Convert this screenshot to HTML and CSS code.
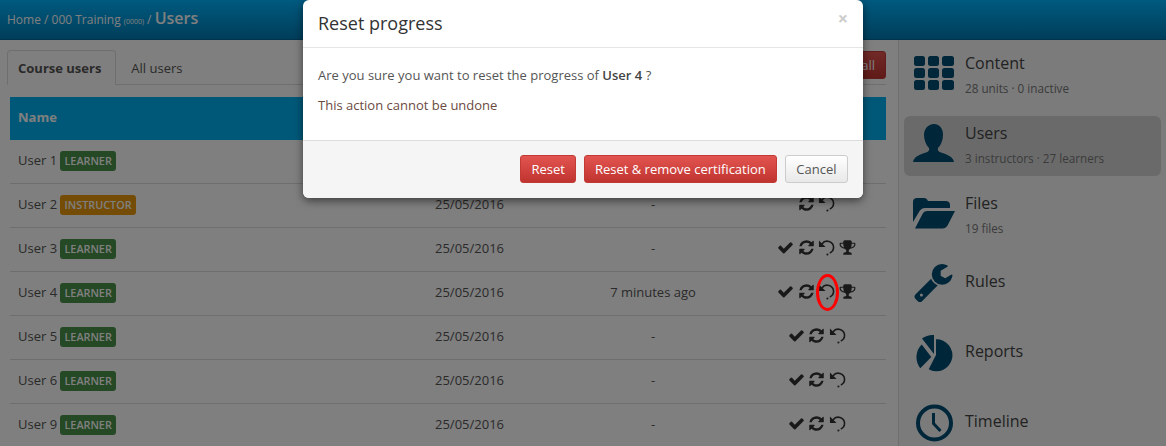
FILE: index.html
```html
<!DOCTYPE html>
<html lang="en">
<head>
    <meta charset="UTF-8">
    <title>Users</title>
    <link rel="stylesheet" href="styles.css">
</head>
<body>
    <svg class="icon-defs" width="0" height="0">
        <symbol id="i-check" viewBox="0 0 1792 1792"><path d="M1671 566q0 40-28 68l-724 724-136 136q-28 28-68 28t-68-28l-136-136-362-362q-28-28-28-68t28-68l136-136q28-28 68-28t68 28l294 295 656-657q28-28 68-28t68 28l136 136q28 28 28 68z"/></symbol>
        <symbol id="i-refresh" viewBox="0 0 1792 1792"><path d="M1639 1056q0 5-1 7-64 268-268 434.5t-478 166.5q-146 0-282.5-55t-243.5-157l-129 129q-19 19-45 19t-45-19-19-45v-448q0-26 19-45t45-19h448q26 0 45 19t19 45-19 45l-137 137q71 66 161 102t187 36q134 0 250-65t186-179q11-17 53-117 8-23 30-23h192q13 0 22.5 9.5t9.5 22.5zm25-800v448q0 26-19 45t-45 19h-448q-26 0-45-19t-19-45 19-45l138-138q-148-137-349-137-134 0-250 65t-186 179q-11 17-53 117-8 23-30 23h-199q-13 0-22.5-9.5t-9.5-22.5v-7q65-268 270-434.5t480-166.5q146 0 284 55.5t245 156.5l130-129q19-19 45-19t45 19 19 45z"/></symbol>
        <symbol id="i-undo" viewBox="0 0 18 18"><path d="M1 1.500v7h7z"/><path d="M4.200 5.200A6.800 6.800 0 0 1 16.500 9 6.800 6.800 0 0 1 12.500 14.800" fill="none" stroke="currentColor" stroke-width="1.700"/><circle cx="10" cy="16.500" r="1.100"/></symbol>
        <symbol id="i-trophy" viewBox="0 0 1792 1792"><path d="M522 883q-74-162-74-371h-256v96q0 78 94.5 162t235.5 113zm1078-275v-96h-256q0 209-74 371 141-29 235.5-113t94.5-162zm128-128v128q0 71-41.5 143t-112 130-173 97.5-215.5 44.5q-42 54-95 95-38 34-52.5 72.5t-14.5 89.5q0 54 30.5 91t97.5 37q75 0 133.5 45.5t58.5 114.5v64q0 14-9 23t-23 9h-832q-14 0-23-9t-9-23v-64q0-69 58.5-114.5t133.5-45.5q67 0 97.5-37t30.5-91q0-51-14.5-89.5t-52.5-72.5q-53-41-95-95-113-5-215.5-44.5t-173-97.5-112-130-41.5-143v-128q0-40 28-68t68-28h288v-96q0-66 47-113t113-47h576q66 0 113 47t47 113v96h288q40 0 68 28t28 68z"/></symbol>
    </svg>

    <div class="page">
        <!-- Top bar -->
        <header class="topbar">
            <span>Home / 000 Training <small>(0000)</small> / </span><strong>Users</strong>
        </header>

        <div class="layout">
            <main class="main">
                <div class="tabs">
                    <a class="tab active">Course users</a>
                    <a class="tab">All users</a>
                    <button class="btn btn-red tab-action">Reset all</button>
                </div>

                <table class="users">
                    <colgroup>
                        <col class="col-name"><col class="col-date"><col class="col-seen"><col class="col-actions">
                    </colgroup>
                    <thead>
                        <tr><th>Name</th><th></th><th></th><th></th></tr>
                    </thead>
                    <tbody>
                        <tr>
                            <td>User 1 <span class="label green">LEARNER</span></td>
                            <td></td><td></td><td></td>
                        </tr>
                        <tr>
                            <td>User 2 <span class="label orange">INSTRUCTOR</span></td>
                            <td>25/05/2016</td><td class="mid">-</td>
                            <td class="mid"><span class="actions"><svg class="act"><use href="#i-refresh"/></svg><svg class="act"><use href="#i-undo"/></svg></span></td>
                        </tr>
                        <tr>
                            <td>User 3 <span class="label green">LEARNER</span></td>
                            <td>25/05/2016</td><td class="mid">-</td>
                            <td class="mid"><span class="actions"><svg class="act"><use href="#i-check"/></svg><svg class="act"><use href="#i-refresh"/></svg><svg class="act"><use href="#i-undo"/></svg><svg class="act"><use href="#i-trophy"/></svg></span></td>
                        </tr>
                        <tr>
                            <td>User 4 <span class="label green">LEARNER</span></td>
                            <td>25/05/2016</td><td class="mid">7 minutes ago</td>
                            <td class="mid"><span class="actions"><svg class="act"><use href="#i-check"/></svg><svg class="act"><use href="#i-refresh"/></svg><svg class="act"><use href="#i-undo"/></svg><svg class="act"><use href="#i-trophy"/></svg></span></td>
                        </tr>
                        <tr>
                            <td>User 5 <span class="label green">LEARNER</span></td>
                            <td>25/05/2016</td><td class="mid">-</td>
                            <td class="mid"><span class="actions"><svg class="act"><use href="#i-check"/></svg><svg class="act"><use href="#i-refresh"/></svg><svg class="act"><use href="#i-undo"/></svg></span></td>
                        </tr>
                        <tr>
                            <td>User 6 <span class="label green">LEARNER</span></td>
                            <td>25/05/2016</td><td class="mid">-</td>
                            <td class="mid"><span class="actions"><svg class="act"><use href="#i-check"/></svg><svg class="act"><use href="#i-refresh"/></svg><svg class="act"><use href="#i-undo"/></svg></span></td>
                        </tr>
                        <tr>
                            <td>User 9 <span class="label green">LEARNER</span></td>
                            <td>25/05/2016</td><td class="mid">-</td>
                            <td class="mid"><span class="actions"><svg class="act"><use href="#i-check"/></svg><svg class="act"><use href="#i-refresh"/></svg><svg class="act"><use href="#i-undo"/></svg></span></td>
                        </tr>
                    </tbody>
                </table>
            </main>

            <!-- Right navigation -->
            <aside class="sidebar">
                <a class="nav-item">
                    <svg class="nav-icon" viewBox="0 0 42 34"><rect x="1" y="0" width="11" height="10" rx="2.5"/><rect x="15" y="0" width="11" height="10" rx="2.5"/><rect x="29" y="0" width="12" height="10" rx="2.5"/><rect x="1" y="12" width="11" height="10" rx="2.5"/><rect x="15" y="12" width="11" height="10" rx="2.5"/><rect x="29" y="12" width="12" height="10" rx="2.5"/><rect x="1" y="24" width="11" height="10" rx="2.5"/><rect x="15" y="24" width="11" height="10" rx="2.5"/><rect x="29" y="24" width="12" height="10" rx="2.5"/></svg>
                    <div class="nav-text"><div class="nav-title">Content</div><div class="nav-sub">28 units · 0 inactive</div></div>
                </a>
                <a class="nav-item active">
                    <svg class="nav-icon" viewBox="0 0 42 38"><path d="M21 0c6 0 9 5 9 11 0 5-2 10-5 13-.6 2 .2 3.500 3 4.500 6 2 12 4 13 9.500H0c1-5.500 7-7.500 13-9.500 2.800-1 3.600-2.500 3-4.500-3-3-5-8-5-13C11 5 15 0 21 0z"/></svg>
                    <div class="nav-text"><div class="nav-title">Users</div><div class="nav-sub">3 instructors · 27 learners</div></div>
                </a>
                <a class="nav-item">
                    <svg class="nav-icon" viewBox="0 0 42 32"><path d="M0 5c0-2.500 1.500-4 4-4h7c2 0 3 1 4 3h18c2.200 0 4 1.500 4 4v3H13C9 11 7.500 12.500 6 15L0 25z"/><path d="M2 31.500 9.500 17c1-2 2.500-3 5-3H42l-7.500 14.500c-1.200 2-2.800 3-5 3z"/></svg>
                    <div class="nav-text"><div class="nav-title">Files</div><div class="nav-sub">19 files</div></div>
                </a>
                <a class="nav-item plain">
                    <svg class="nav-icon" viewBox="128 128 1600 1643"><path d="M448 1472q0-26-19-45t-45-19-45 19-19 45 19 45 45 19 45-19 19-45zm644-420l-682 682q-37 37-90 37-52 0-91-37l-106-108q-38-36-38-90 0-53 38-91l681-681q39 98 114.500 173.500t173.500 114.500zm634-435q0 39-23 106-47 134-164.500 217.500t-258.500 83.500q-185 0-316.500-131.500t-131.500-316.500 131.500-316.500 316.500-131.500q58 0 121.500 16.500t107.500 46.500q16 11 16 28t-16 28l-293 169v224l193 107q5-3 79-48.500t135.500-81 70.500-35.500q15 0 23.500 10t8.500 25z"/></svg>
                    <div class="nav-text"><div class="nav-title">Rules</div></div>
                </a>
                <a class="nav-item plain">
                    <svg class="nav-icon" viewBox="-1 -1 38 38"><path d="M6 3.500A18 18 0 0 1 18 0V19z"/><path d="M5.700 9.500 15.300 22 4.300 33.300A18 18 0 0 1 5.700 9.500z"/><path d="M20 4.300A16 16 0 1 1 12.700 34.300L20 20z"/></svg>
                    <div class="nav-text"><div class="nav-title">Reports</div></div>
                </a>
                <a class="nav-item plain">
                    <svg class="nav-icon" viewBox="0 0 42 38"><circle cx="21.500" cy="19" r="16.500" fill="none" stroke="#004c73" stroke-width="4"/><path d="M20.500 9v10.500l7 7.500" fill="none" stroke="#004c73" stroke-width="3"/></svg>
                    <div class="nav-text"><div class="nav-title">Timeline</div></div>
                </a>
            </aside>
        </div>

        <div class="backdrop"></div>

        <!-- Confirmation dialog -->
        <div class="modal">
            <div class="modal-head">
                <h3>Reset progress</h3>
                <span class="close">×</span>
            </div>
            <div class="modal-body">
                <p>Are you sure you want to reset the progress of <b>User 4</b> ?</p>
                <p class="warn">This action cannot be undone</p>
            </div>
            <div class="modal-foot">
                <button class="btn btn-red">Reset</button>
                <button class="btn btn-red">Reset &amp; remove certification</button>
                <button class="btn btn-light">Cancel</button>
            </div>
        </div>

        <div class="highlight"></div>
    </div>
</body>
</html>
```

FILE: styles.css
```css
* {
    box-sizing: border-box;
}

body {
    margin: 0;
    font-family: "Open Sans", Arial, sans-serif;
    font-size: 13px;
    color: #555;
    background: #fff;
}

.icon-defs {
    position: absolute;
}

.page {
    position: relative;
    height: 446px;
    overflow: hidden;
}

/* Top bar */
.topbar {
    height: 40px;
    padding: 7px 0 0 7px;
    color: #fff;
    font-size: 12px;
    line-height: 22px;
    background: linear-gradient(#00b4ff, #007cb5);
    border-bottom: 1px solid #00689a;
}

.topbar small {
    font-size: 7px;
}

.topbar strong {
    font-size: 16px;
    font-weight: 600;
}

.layout {
    display: flex;
    height: 406px;
}

.main {
    width: 898px;
    padding: 10px 12px 0 10px;
}

/* Tabs */
.tabs {
    display: flex;
    align-items: flex-start;
    height: 35px;
    margin-left: -3px;
    border-bottom: 1px solid #ddd;
}

.tab {
    height: 35px;
    padding: 9px 13px 0 15px;
    line-height: 18px;
    color: #555;
}

.tab.active {
    padding: 8px 14px 0 10px;
    font-weight: 700;
    background: #fff;
    border: 1px solid #ddd;
    border-bottom-color: #fff;
    border-radius: 4px 4px 0 0;
}

.tab-action {
    margin: 1px 0 0 auto;
    font-size: 14px;
}

/* Users table */
.users {
    width: 876px;
    margin-top: 12px;
    border-collapse: collapse;
    table-layout: fixed;
}

.col-name { width: 417px; }
.col-date { width: 132px; }
.col-seen { width: 188px; }
.col-actions { width: 139px; }

.users th {
    height: 43px;
    padding: 0 8px 3px;
    text-align: left;
    color: #fff;
    font-size: 13px;
    background: #00b0f0;
}

.users td {
    height: 44px;
    padding: 0 8px 3px;
    border-bottom: 1px solid #ddd;
}

.users td:first-child {
    padding-bottom: 1px;
}

.users tbody tr:first-child td {
    height: 43px;
}

.users td.mid {
    text-align: center;
}

.label {
    display: inline-block;
    padding: 0 4px;
    font-size: 10.800px;
    font-weight: 600;
    line-height: 20px;
    color: #fff;
    border-radius: 3px;
    vertical-align: 0;
}

.label.green {
    background: #4a904a;
}

.label.orange {
    background: #e8980c;
}

.actions {
    display: inline-flex;
    align-items: center;
    justify-content: center;
    gap: 3.500px;
    margin-bottom: 2px;
    vertical-align: middle;
    color: #333;
}

.act {
    width: 17px;
    height: 17px;
    fill: currentColor;
}

/* Sidebar */
.sidebar {
    width: 268px;
    padding: 6px 5px 0;
    background: #f7f7f7;
    border-left: 1px solid #ddd;
}

.nav-item {
    display: flex;
    align-items: center;
    height: 60px;
    margin-bottom: 10px;
    padding-left: 9px;
    border-radius: 6px;
}

.nav-item.active {
    background: #d5d5d5;
}

.nav-icon {
    flex: none;
    width: 42px;
    height: 38px;
    margin: 0 10px 6px 0;
    fill: #004c73;
}

.nav-text {
    margin-bottom: 4px;
}

.nav-title {
    font-size: 16px;
    line-height: 22px;
    color: #444;
}

.nav-sub {
    margin-top: 6px;
    font-size: 11.700px;
    line-height: 16px;
    color: #777;
}

.plain .nav-text {
    margin-bottom: 10px;
}

/* Modal */
.backdrop {
    position: absolute;
    inset: 0;
    background: rgba(0, 0, 0, 0.5);
}

.modal {
    position: absolute;
    top: 0;
    left: 303px;
    width: 560px;
    height: 198px;
    display: flex;
    flex-direction: column;
    background: #fff;
    border-radius: 6px;
    box-shadow: 0 3px 9px rgba(0, 0, 0, 0.5);
    overflow: hidden;
}

.modal-head {
    display: flex;
    justify-content: space-between;
    height: 48px;
    padding: 0 15px;
    border-bottom: 1px solid #e5e5e5;
}

.modal-head h3 {
    margin: 0;
    font-size: 18px;
    font-weight: 400;
    line-height: 46px;
    color: #333;
}

.close {
    font-size: 18px;
    font-weight: 700;
    line-height: 36px;
    color: #ccc;
}

.modal-body {
    height: 92px;
    padding: 18px 15px 0;
    line-height: 18px;
}

.modal-body p {
    margin: 0 0 12px;
}

.modal-body b {
    font-weight: 600;
    color: #444;
}

.warn {
    color: #6b4a3f;
}

.modal-foot {
    display: flex;
    justify-content: flex-end;
    gap: 8px;
    height: 58px;
    padding: 14px 15px 0;
    background: #f5f5f5;
    border-top: 1px solid #ddd;
}

.btn {
    height: 28px;
    padding: 0 10px;
    font-family: inherit;
    font-size: 13px;
    border-radius: 3px;
    border: 1px solid transparent;
}

.btn-red {
    color: #fff;
    background: linear-gradient(#e25450, #c0342f);
    border-color: #c23a36;
}

.btn-light {
    padding: 0 10.500px;
    color: #555;
    background: linear-gradient(#fff, #e8e8e8);
    border-color: #ccc;
}

/* Red annotation around the undo icon of User 4 */
.highlight {
    position: absolute;
    left: 816px;
    top: 274px;
    width: 23px;
    height: 37px;
    border: 3px solid #f00;
    border-radius: 50%;
}
```
